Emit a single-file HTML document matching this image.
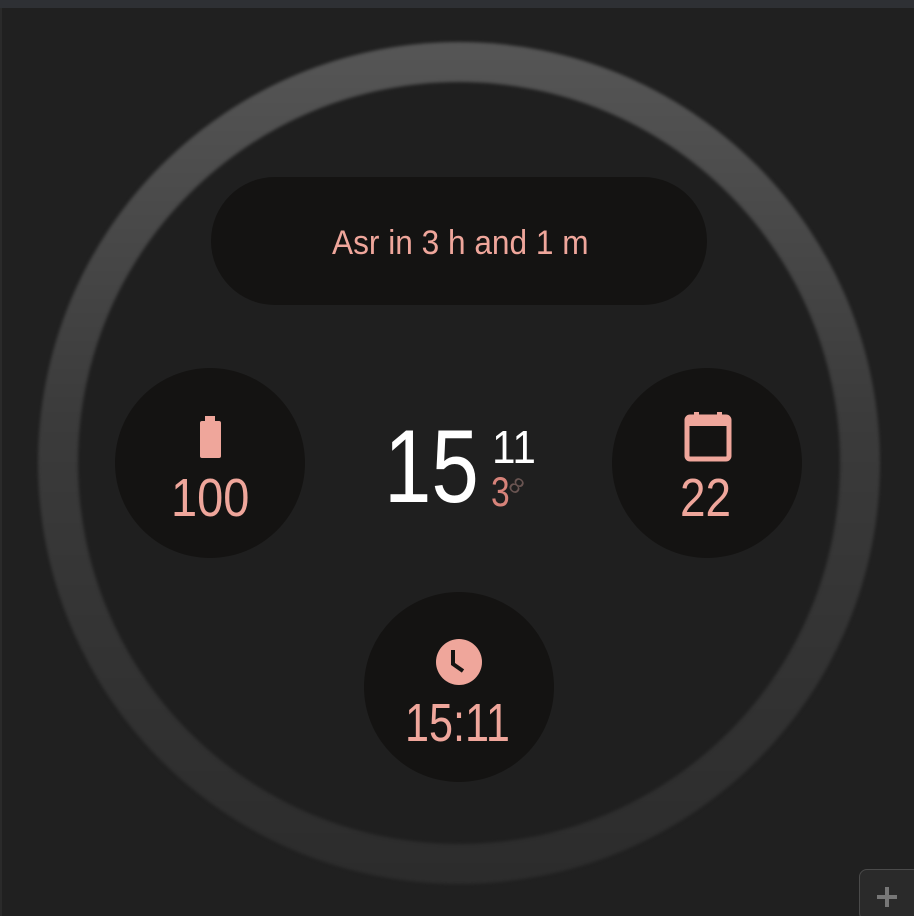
<!DOCTYPE html>
<html style="overflow:hidden;width:914px;height:916px;"><head><style>
html,body{margin:0;padding:0;}
body{width:914px;height:916px;background:#202020;position:relative;overflow:hidden;font-family:"Liberation Sans",sans-serif;}
.top{position:absolute;left:0;top:0;width:914px;height:8px;background:#2e3034;}
.ledge{position:absolute;left:0;top:8px;width:2px;height:908px;background:#2a2a2a;}
.ring{position:absolute;left:38px;top:42px;width:842px;height:842px;border-radius:50%;background:linear-gradient(#565656,#3b3b3b 45%,#2c2c2c);filter:blur(1.5px);}
.dial{position:absolute;left:78px;top:82px;width:762px;height:762px;border-radius:50%;background:#1f1f1f;filter:blur(1.5px);}
.pill{position:absolute;left:211px;top:177px;width:496px;height:128px;border-radius:64px;background:#141312;}
.c{position:absolute;width:190px;height:190px;border-radius:50%;background:#141312;}
.t{position:absolute;color:#efa69b;white-space:nowrap;}
.sx{display:inline-block;transform-origin:left top;}
</style></head><body>
<div class="top"></div><div class="ledge"></div>
<div class="ring"></div><div class="dial"></div>
<div class="pill"></div>
<div class="t" style="left:332px;top:224px;font-size:34px;"><span class="sx" style="transform:scaleX(0.93)">Asr in 3 h and 1 m</span></div>
<div class="c" style="left:115px;top:368px;"></div>
<div class="c" style="left:612px;top:368px;"></div>
<div class="c" style="left:364px;top:592px;"></div>
<svg style="position:absolute;left:198px;top:414px" width="26" height="46"><rect x="7" y="2" width="10" height="6" fill="#efa69b"/><rect x="2" y="7" width="21" height="37" rx="2" fill="#efa69b"/></svg>
<div class="t" style="left:171px;top:467px;font-size:54px;"><span class="sx" style="transform:scaleX(0.87)">100</span></div>
<svg style="position:absolute;left:682px;top:410px" width="52" height="52"><rect x="5" y="7" width="42" height="42" rx="3" fill="none" stroke="#efa69b" stroke-width="5"/><rect x="5" y="7" width="42" height="9" fill="#efa69b"/><rect x="12" y="2" width="5" height="8" fill="#efa69b"/><rect x="35" y="2" width="5" height="8" fill="#efa69b"/></svg>
<div class="t" style="left:680px;top:467px;font-size:54px;"><span class="sx" style="transform:scaleX(0.85)">22</span></div>
<svg style="position:absolute;left:434px;top:637px" width="50" height="50"><circle cx="25" cy="25" r="23" fill="#efa69b"/><path d="M19 13 V27 L29 34" fill="none" stroke="#141312" stroke-width="4"/></svg>
<div class="t" style="left:405px;top:692px;font-size:54px;"><span class="sx" style="transform:scaleX(0.8)">15:11</span></div>
<div class="t" style="left:384px;top:408px;font-size:104px;color:#fff;"><span class="sx" style="transform:scaleX(0.82)">15</span></div>
<div class="t" style="left:492px;top:420px;font-size:46px;color:#fff;"><span class="sx" style="transform:scaleX(0.92)">11</span></div>
<div class="t" style="left:491px;top:468px;font-size:42px;color:#d7837a;"><span class="sx" style="transform:scaleX(0.8)">3</span></div>
<div class="t" style="left:520px;top:472px;font-size:22px;color:#6a5552;"><span class="sx" style="transform:rotate(40deg)">8</span></div>
<div style="position:absolute;left:859px;top:869px;width:60px;height:50px;border:1px solid #4a4a4a;border-radius:8px;background:#2a2a2a;"></div>
<div style="position:absolute;left:877px;top:895px;width:20px;height:4px;background:#777;"></div>
<div style="position:absolute;left:885px;top:887px;width:4px;height:20px;background:#777;"></div>
</body></html>
